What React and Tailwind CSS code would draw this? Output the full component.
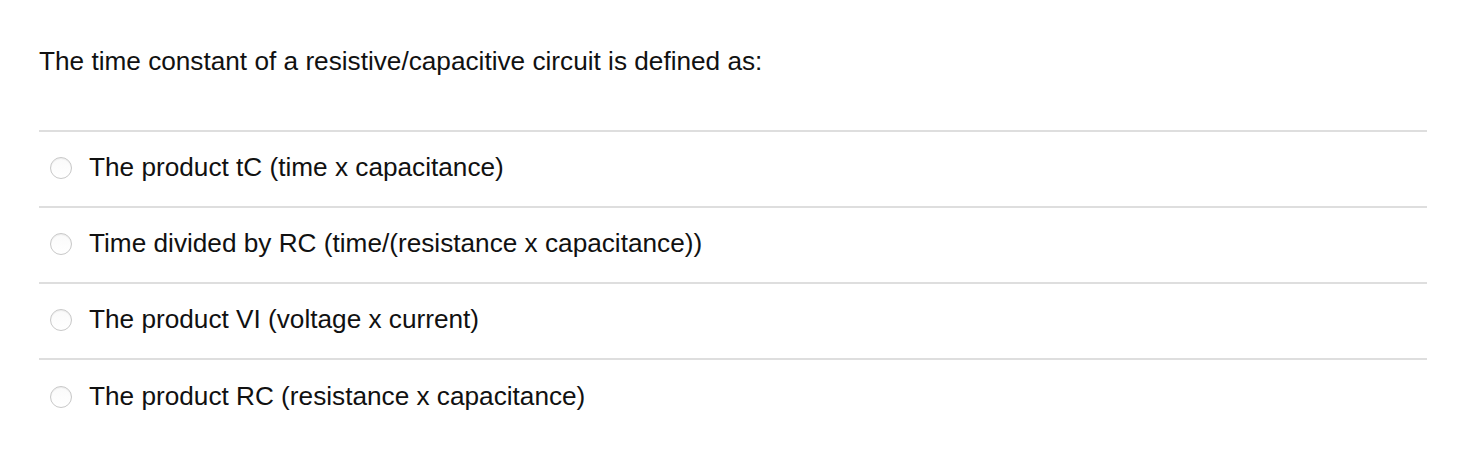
export default function App() {
  const options = [
    "The product tC (time x capacitance)",
    "Time divided by RC (time/(resistance x capacitance))",
    "The product VI (voltage x current)",
    "The product RC (resistance x capacitance)",
  ]

  return (
    <div className="w-[1458px] h-[457px] bg-white text-[#111] font-['Liberation_Sans',Arial,sans-serif] pl-[39px] pr-[31px] pt-[45px]">
      <p className="text-[26.2px] leading-[32px]">The time constant of a resistive/capacitive circuit is defined as:</p>
      <div className="mt-[53px] border-t-2 border-[#dedede]">
        {options.map((o, i) => (
          <label key={i} className={"flex items-center h-[76px] pb-[2px] " + (i < options.length - 1 ? "border-b-2 border-[#dedede]" : "")}>
            <span className="ml-[11px] w-[22px] h-[22px] rounded-full border border-[#c8c8c8] bg-gradient-to-b from-[#fafafa] to-white shadow-[inset_0_1px_1px_rgba(0,0,0,0.06)]" />
            <span className="ml-[17px] text-[26.2px]">{o}</span>
          </label>
        ))}
      </div>
    </div>
  )
}
